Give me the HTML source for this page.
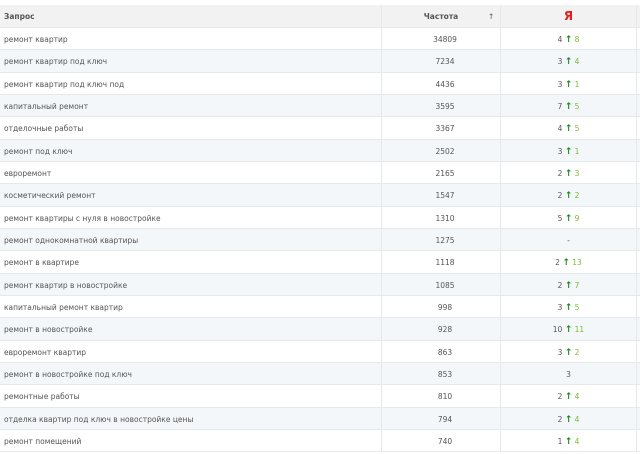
<html><head><style>
body{margin:0;width:640px;height:453px;background:#fff;font-family:"DejaVu Sans","Liberation Sans",sans-serif;font-size:7.5px;color:#555;overflow:hidden;position:relative}
.r{position:absolute;left:0;width:640px;height:22px;border-bottom:1px solid #e6e9ec;box-sizing:border-box}
.s{background:#f4f7fa}
.c{position:absolute;top:0;height:100%;line-height:23px;box-sizing:border-box}
.a{left:4px}
.b{left:381px;width:119px;text-align:center;border-left:1px solid #e6e9ec;padding-left:8px}
.d{left:500px;width:137px;text-align:center;border-left:1px solid #e6e9ec;border-right:1px solid #e6e9ec}
.g{color:#1a8a1a;font-weight:bold;font-size:9px}.l{color:#7bb832}
.h{background:#f2f2f2;font-weight:bold;color:#555}
</style></head><body>
<div class="r h" style="top:5px;height:23px"><div class="c a">Запрос</div><div class="c b" style="padding-left:0;border-left-color:#e8e8e8">Частота<span style="position:absolute;left:106px;font-weight:normal">↑</span></div><div class="c d" style="color:#e02020;font-size:12px;font-weight:bold;border-color:#e8e8e8">Я</div></div>
<div id="t"></div>
<script>
var d=[["ремонт квартир",34809,"4","8"],["ремонт квартир под ключ",7234,"3","4"],["ремонт квартир под ключ под",4436,"3","1"],["капитальный ремонт",3595,"7","5"],["отделочные работы",3367,"4","5"],["ремонт под ключ",2502,"3","1"],["евроремонт",2165,"2","3"],["косметический ремонт",1547,"2","2"],["ремонт квартиры с нуля в новостройке",1310,"5","9"],["ремонт однокомнатной квартиры",1275,"-",""],["ремонт в квартире",1118,"2","13"],["ремонт квартир в новостройке",1085,"2","7"],["капитальный ремонт квартир",998,"3","5"],["ремонт в новостройке",928,"10","11"],["евроремонт квартир",863,"3","2"],["ремонт в новостройке под ключ",853,"3",""],["ремонтные работы",810,"2","4"],["отделка квартир под ключ в новостройке цены",794,"2","4"],["ремонт помещений",740,"1","4"]];
var h="";d.forEach(function(x,i){var y=28+i*22.33;var r=x[3]?x[2]+' <span class="g">↑</span> <span class="l">'+x[3]+'</span>':x[2];
h+='<div class="r'+(i%2?' s':'')+'" style="top:'+y+'px;height:22.33px"><div class="c a">'+x[0]+'</div><div class="c b">'+x[1]+'</div><div class="c d">'+r+'</div></div>';});
document.getElementById("t").innerHTML=h;
</script>
</body></html>
